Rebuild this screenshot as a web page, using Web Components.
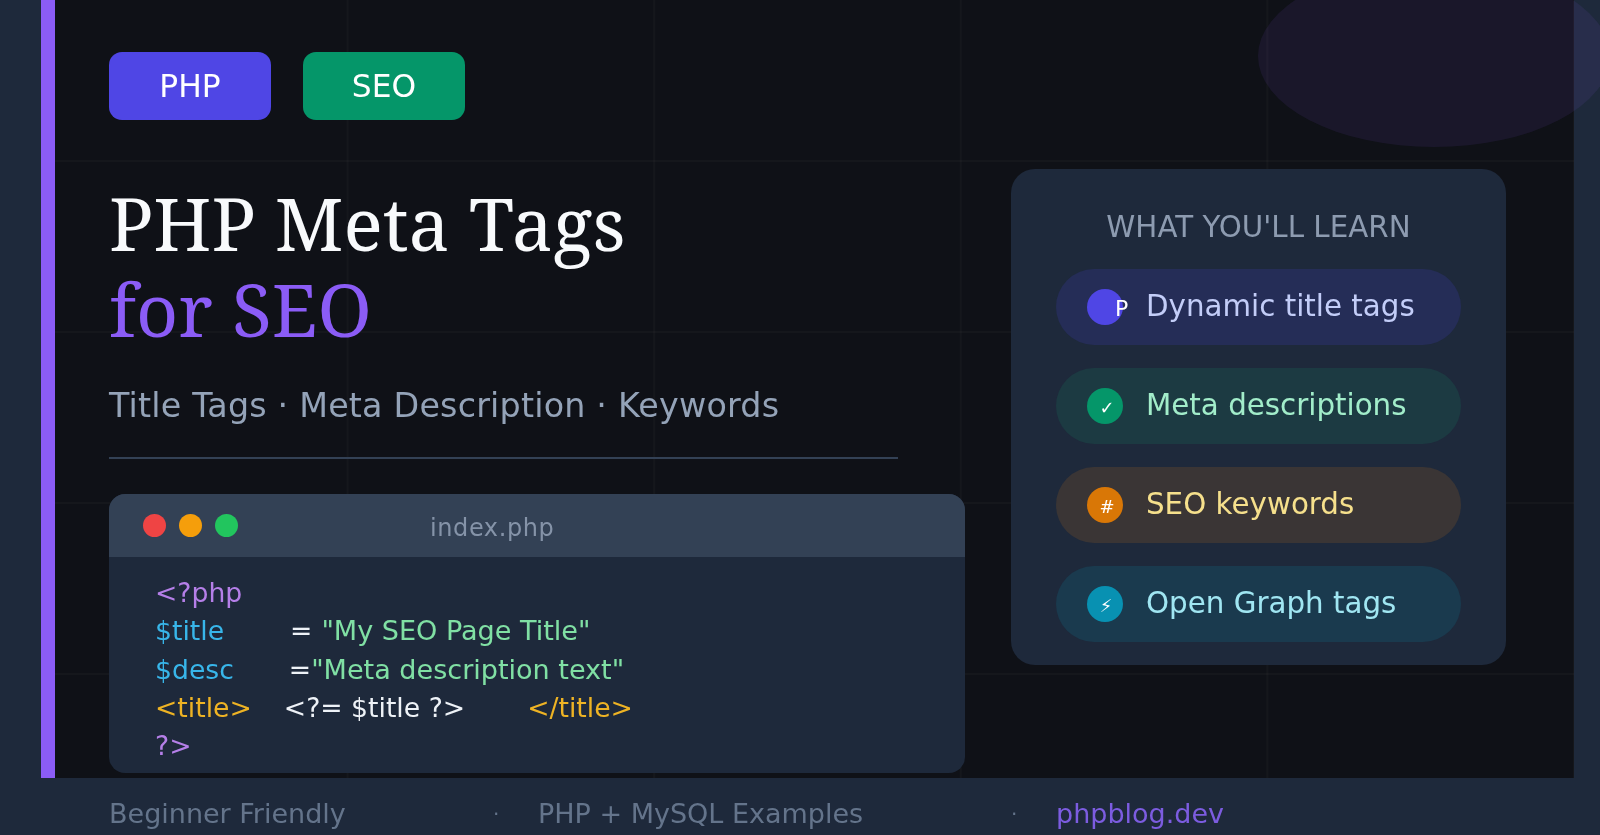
<!DOCTYPE html>
<html lang="en">
<head>
<meta charset="utf-8">
<title>PHP Meta Tags for SEO</title>
<style>
  html, body { margin: 0; height: 100%; background: #1e293b; }
</style>
</head>
<body>
<og-card>
  <tag-chip slot="tags" color="#4f46e5">PHP</tag-chip>
  <tag-chip slot="tags" color="#059669">SEO</tag-chip>
  <span slot="line1">PHP Meta Tags</span>
  <span slot="line2">for SEO</span>
  <span slot="sub">Title Tags · Meta Description · Keywords</span>
  <code-window slot="code" filename="index.php"></code-window>
  <learn-panel slot="panel" heading="WHAT YOU'LL LEARN">
    <learn-item bg="#252d57" dot="#4f46e5" text="#c3cdf8" glyph="P" glyphsize="22" inset="28" drop="2">Dynamic title tags</learn-item>
    <learn-item bg="#1c3a42" dot="#059669" text="#a2edca" glyph="✓" glyphsize="18" shift="2" drop="3">Meta descriptions</learn-item>
    <learn-item bg="#3a3535" dot="#d97706" text="#f6e08c" glyph="#" glyphsize="18" shift="2" drop="3">SEO keywords</learn-item>
    <learn-item bg="#1a3a4e" dot="#0891b2" text="#a0e6f2" glyph="⚡" glyphsize="18" shift="1" drop="3">Open Graph tags</learn-item>
  </learn-panel>
  <card-footer slot="footer"></card-footer>
</og-card>

<script>
class TagChip extends HTMLElement {
  constructor() {
    super();
    this.attachShadow({mode: "open"});
  }
  connectedCallback() {
    this.shadowRoot.innerHTML = `
    <style>
      :host {
        display: flex;
        align-items: center;
        justify-content: center;
        width: 162px;
        height: 68px;
        border-radius: 13px;
        background: ${this.getAttribute("color")};
        color: #fff;
        font: 31.3px "DejaVu Sans", sans-serif;
      }
    </style>
    <slot></slot>`;
  }
}
customElements.define("tag-chip", TagChip);

class CodeWindow extends HTMLElement {
  constructor() {
    super();
    this.attachShadow({mode: "open"});
  }
  connectedCallback() {
    this.shadowRoot.innerHTML = `
    <style>
      :host {
        display: block;
        width: 856px;
        height: 279px;
        border-radius: 16px;
        overflow: hidden;
        background: #1e293b;
        font: 26.67px/38.3px "DejaVu Sans", sans-serif;
      }
      .bar {
        display: flex;
        align-items: center;
        height: 63px;
        padding-left: 34px;
        gap: 13px;
        background: #334155;
        box-sizing: border-box;
      }
      .dot { width: 23px; height: 23px; border-radius: 50%; }
      .name {
        margin-left: 179px;
        margin-top: 5px;
        color: #8593a8;
        font-size: 24px;
        letter-spacing: .6px;
      }
      pre { margin: 0; padding: 17px 0 0 46px; font: inherit; white-space: pre; }
      .kw { color: #b57fe8; }
      .var { color: #38b6ea; }
      .str { color: #80e0a4; font-size: 27.05px; }
      .tag { color: #eeb324; }
      .txt { color: #eef2f7; }
    </style>
    <div class="bar">
      <span class="dot" style="background:#ef4444"></span>
      <span class="dot" style="background:#f59e0b"></span>
      <span class="dot" style="background:#22c55e"></span>
      <span class="name">${this.getAttribute("filename")}</span>
    </div>
    <pre><span class="kw">&lt;?php</span>
<span class="var">$title</span><span class="txt" style="margin-left:66px">=</span><span class="str" style="margin-left:9px">"My SEO Page Title"</span>
<span class="var">$desc</span><span class="txt" style="margin-left:55px">=</span><span class="str">"Meta description text"</span>
<span class="tag">&lt;title&gt;</span><span class="txt" style="margin-left:32px">&lt;?= $title ?&gt;</span><span class="tag" style="margin-left:62px">&lt;/title&gt;</span>
<span class="kw">?&gt;</span></pre>`;
  }
}
customElements.define("code-window", CodeWindow);

class LearnItem extends HTMLElement {
  constructor() {
    super();
    this.attachShadow({mode: "open"});
  }
  connectedCallback() {
    const inset = this.getAttribute("inset");
    const shift = this.getAttribute("shift") || 0;
    const drop = this.getAttribute("drop") || 0;
    this.shadowRoot.innerHTML = `
    <style>
      :host {
        display: flex;
        align-items: center;
        height: 76px;
        padding-left: 31px;
        gap: 23px;
        border-radius: 38px;
        background: ${this.getAttribute("bg")};
        color: ${this.getAttribute("text")};
        font: 29.33px "DejaVu Sans", sans-serif;
      }
      .dot {
        flex: none;
        display: flex;
        align-items: center;
        justify-content: ${inset ? "flex-start" : "center"};
        box-sizing: border-box;
        width: 36px;
        height: 36px;
        padding: ${drop}px 0 0 ${inset || shift * 2}px;
        border-radius: 50%;
        background: ${this.getAttribute("dot")};
        color: #fff;
        font-size: ${this.getAttribute("glyphsize")}px;
        white-space: nowrap;
      }
      .label { margin-top: -2px; }
    </style>
    <span class="dot">${this.getAttribute("glyph")}</span>
    <span class="label"><slot></slot></span>`;
  }
}
customElements.define("learn-item", LearnItem);

class LearnPanel extends HTMLElement {
  constructor() {
    super();
    this.attachShadow({mode: "open"});
  }
  connectedCallback() {
    this.shadowRoot.innerHTML = `
    <style>
      :host {
        display: flex;
        flex-direction: column;
        gap: 23px;
        box-sizing: border-box;
        width: 495px;
        height: 496px;
        padding: 41px 45px 0;
        border-radius: 24px;
        background: #1e293b;
      }
      h2 {
        margin: 0 0 2px;
        text-align: center;
        color: #8d9bb0;
        font: 400 29.33px/34px "DejaVu Sans", sans-serif;
      }
    </style>
    <h2>${this.getAttribute("heading")}</h2>
    <slot></slot>`;
  }
}
customElements.define("learn-panel", LearnPanel);

class CardFooter extends HTMLElement {
  constructor() {
    super();
    this.attachShadow({mode: "open"});
  }
  connectedCallback() {
    this.shadowRoot.innerHTML = `
    <style>
      :host {
        display: block;
        height: 57px;
        font: 27px/40px "DejaVu Sans", sans-serif;
        color: #64748b;
        white-space: nowrap;
      }
      div { display: flex; padding: 16px 0 0 109px; }
      .sep { font-size: 20px; }
      .link { color: #7c5ce0; }
    </style>
    <div>
      <span style="width:384px">Beginner Friendly</span>
      <span class="sep" style="width:45px">·</span>
      <span style="width:473px">PHP + MySQL Examples</span>
      <span class="sep" style="width:45px">·</span>
      <span class="link">phpblog.dev</span>
    </div>`;
  }
}
customElements.define("card-footer", CardFooter);

class OgCard extends HTMLElement {
  constructor() {
    super();
    this.attachShadow({mode: "open"});
  }
  connectedCallback() {
    this.shadowRoot.innerHTML = `
    <style>
      :host {
        display: block;
        position: relative;
        width: 1600px;
        height: 835px;
        overflow: hidden;
        background: #1e293b;
        filter: blur(.35px);
      }
      .blob {
        position: absolute;
        left: 1258px;
        top: -35px;
        width: 352px;
        height: 182px;
        border-radius: 50%;
        background: rgba(139, 92, 246, .09);
      }
      main {
        display: flex;
        box-sizing: border-box;
        width: 1533px;
        height: 778px;
        margin-left: 41px;
        border-left: 14px solid #8b5cf6;
        background-color: #0f1117;
        background-image:
          linear-gradient(rgba(255,255,255,.022) 2px, transparent 2px),
          linear-gradient(90deg, rgba(255,255,255,.022) 2px, transparent 2px);
        background-size: 306.6px 171px;
        background-position: -1px -11px;
        background-origin: border-box;
        background-clip: padding-box;
      }
      .left { width: 856px; margin-left: 54px; padding-top: 52px; }
      .tags { display: flex; gap: 32px; }
      h1 {
        margin: 60px 0 0;
        font: 400 73.33px/86px "Noto Serif", "DejaVu Serif", serif;
        color: #f8fafc;
      }
      h1 .accent { display: block; color: #8b5cf6; }
      h1 span { display: block; }
      .sub {
        margin-top: 34px;
        font: 33.33px/40px "DejaVu Sans", sans-serif;
        letter-spacing: .2px;
        color: #94a3b8;
      }
      hr { height: 2px; margin: 31px 0 35px; border: 0; width: 789px; background: #334155; }
      .right { margin: 169px 0 0 46px; }
    </style>
    <div class="blob"></div>
    <main>
      <div class="left">
        <div class="tags"><slot name="tags"></slot></div>
        <h1><span><slot name="line1"></slot></span><span class="accent"><slot name="line2"></slot></span></h1>
        <div class="sub"><slot name="sub"></slot></div>
        <hr>
        <slot name="code"></slot>
      </div>
      <div class="right"><slot name="panel"></slot></div>
    </main>
    <slot name="footer"></slot>`;
  }
}
customElements.define("og-card", OgCard);
</script>
</body>
</html>
